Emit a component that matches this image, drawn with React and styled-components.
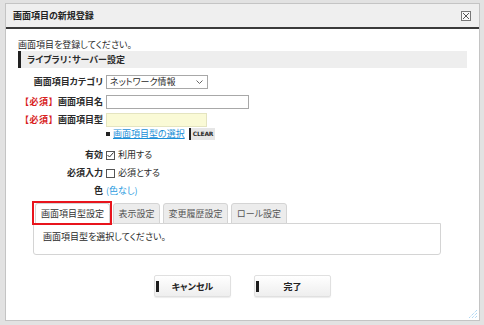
import React from 'react';
import styled, { createGlobalStyle } from 'styled-components';

const GlobalStyle = createGlobalStyle`
  html, body {
    margin: 0;
    padding: 0;
    background: #e2e2e2;
  }
  body {
    font-family: "Noto Sans CJK JP", "DejaVu Sans", sans-serif;
    font-size: 9px;
    line-height: 1.25;
    font-feature-settings: "palt" 1;
    color: #2a2a2a;
  }
`;

const Dialog = styled.div`
  position: relative;
  box-sizing: border-box;
  margin: 3px 4px 0 5px;
  width: 475px;
  height: 318px;
  background: #fff;
  border: 1px solid #c4c4c4;
  display: flex;
  flex-direction: column;
`;

const TitleBar = styled.div`
  height: 23px;
  background: #efefef;
  border-bottom: 2px solid #3a3a3a;
  display: flex;
  align-items: center;
  justify-content: space-between;
  padding: 0 8px 0 7px;
`;

const Title = styled.h1`
  margin: 0;
  font-size: 9px;
  font-weight: bold;
  color: #222;
`;

const CloseBox = styled.span`
  width: 8px;
  height: 8px;
  border: 1px solid #777;
  display: flex;
  align-items: center;
  justify-content: center;
  background: #f8f8f8;
`;

const Body = styled.div`
  flex: 1;
  padding: 10px 12px 0 12px;
  display: flex;
  flex-direction: column;
`;

const Intro = styled.p`
  margin: 0;
  height: 12px;
  line-height: 12px;
`;

const SectionHeader = styled.div`
  height: 17px;
  background: #eeeeee;
  border-left: 3px solid #222;
  padding-left: 6px;
  display: flex;
  align-items: center;
  font-weight: bold;
`;

const Form = styled.div`
  margin-top: 5px;
  display: grid;
  grid-template-columns: 85px 1fr;
  grid-template-rows: 18px 21px 16px 12px 24px 18px 18px;
  column-gap: 3px;
`;

const Label = styled.div`
  text-align: right;
  font-weight: bold;
  align-self: ${p => (p.end ? 'end' : 'center')};
  line-height: 18px;
  white-space: nowrap;
`;

const Req = styled.span`
  color: #d81e1e;
  font-feature-settings: normal;
  letter-spacing: 0.5px;
`;

const Cell = styled.div`
  display: flex;
  align-items: center;
  gap: 3px;
  height: 18px;
  align-self: ${p => (p.end ? 'end' : 'center')};
  white-space: nowrap;
`;

const Select = styled.div`
  box-sizing: border-box;
  width: 102px;
  height: 14px;
  border: 1px solid #a8a8a8;
  display: flex;
  align-items: center;
  justify-content: space-between;
  padding: 0 4px 0 3px;
`;

const TextInput = styled.div`
  box-sizing: border-box;
  width: ${p => p.w}px;
  height: 14px;
  border: 1px solid ${p => (p.yellow ? '#e4e4c0' : '#a8a8a8')};
  background: ${p => (p.yellow ? '#fafad6' : '#fff')};
`;

const Bullet = styled.span`
  width: 4px;
  height: 4px;
  background: #222;
`;

const Link = styled.a`
  color: #1a8fd8;
  text-decoration: underline;
  cursor: pointer;
`;

const ClearButton = styled.span`
  box-sizing: border-box;
  height: 12px;
  margin-left: 1px;
  padding: 0 2px 0 2px;
  border-left: 2px solid #222;
  background: #e6e6e6;
  font-size: 6px;
  font-weight: bold;
  line-height: 12px;
  letter-spacing: -0.2px;
  font-family: "DejaVu Sans", sans-serif;
`;

const Check = styled.span`
  box-sizing: border-box;
  width: 9px;
  height: 9px;
  border: 1px solid #555;
  display: inline-flex;
  align-items: center;
  justify-content: center;
`;

const ColorLink = styled.span`
  color: #2a9be0;
`;

const Tabs = styled.div`
  margin: 3px 0 0 15px;
  display: flex;
  flex-direction: column;
  width: 408px;
`;

const TabRow = styled.div`
  display: flex;
  gap: 3px;
  padding-left: 2px;
`;

const Tab = styled.div`
  position: relative;
  box-sizing: border-box;
  width: ${p => p.w}px;
  height: 21px;
  display: flex;
  align-items: center;
  justify-content: center;
  color: ${p => (p.active ? '#333' : '#555')};
  background: ${p => (p.active ? '#fff' : '#ececec')};
  border: 1px solid #d4d4d4;
  border-bottom: ${p => (p.active ? '1px solid #fff' : '1px solid #d4d4d4')};
  border-radius: 3px 3px 0 0;
  margin-bottom: -1px;
  z-index: ${p => (p.active ? 2 : 1)};
  &::after {
    content: ${p => (p.active ? "''" : 'none')};
    position: absolute;
    left: -4px;
    right: -3px;
    top: -3px;
    bottom: -2px;
    border: 2px solid #e8141c;
  }
`;

const Panel = styled.div`
  box-sizing: border-box;
  height: 32px;
  border: 1px solid #d4d4d4;
  border-radius: 0 0 3px 3px;
  padding: 7px 9px;
`;

const Buttons = styled.div`
  margin-top: 20px;
  display: flex;
  justify-content: center;
  gap: 23px;
`;

const Button = styled.button`
  position: relative;
  box-sizing: border-box;
  width: 77px;
  height: 22px;
  border: 1px solid #e0e0e0;
  border-radius: 2px;
  background: linear-gradient(#ffffff, #eeeeee);
  font-family: inherit;
  font-feature-settings: "palt" 1;
  font-size: 9px;
  font-weight: bold;
  color: #222;
  box-shadow: 0 1px 1px rgba(0, 0, 0, 0.08);
  &::before {
    content: '';
    position: absolute;
    left: 1px;
    top: 5px;
    width: 3px;
    height: 11px;
    background: #1e1e1e;
  }
`;

const Grip = styled.svg`
  position: absolute;
  right: 1px;
  bottom: 1px;
`;

export default function App() {
  return (
    <>
      <GlobalStyle />
      <Dialog>
        <TitleBar>
          <Title>画面項目の新規登録</Title>
          <CloseBox>
            <svg width="6" height="6" viewBox="0 0 6 6">
              <path d="M0 0L6 6M6 0L0 6" stroke="#555" strokeWidth="1" />
            </svg>
          </CloseBox>
        </TitleBar>
        <Body>
          <Intro>画面項目を登録してください。</Intro>
          <SectionHeader>ライブラリ：サーバー設定</SectionHeader>
          <Form>
            <Label>画面項目カテゴリ</Label>
            <Cell>
              <Select>
                <span>ネットワーク情報</span>
                <svg width="7" height="4" viewBox="0 0 7 4">
                  <path d="M0.5 0.5L3.5 3.5L6.5 0.5" fill="none" stroke="#666" />
                </svg>
              </Select>
            </Cell>

            <Label><Req>【必須】</Req>画面項目名</Label>
            <Cell><TextInput w={143} /></Cell>

            <Label><Req>【必須】</Req>画面項目型</Label>
            <Cell><TextInput w={101} yellow /></Cell>

            <div />
            <Cell>
              <Bullet />
              <Link>画面項目型の選択</Link>
              <ClearButton>CLEAR</ClearButton>
            </Cell>

            <Label end>有効</Label>
            <Cell end>
              <Check>
                <svg width="7" height="6" viewBox="0 0 7 6">
                  <path d="M0.5 3L2.5 5L6.5 0.5" fill="none" stroke="#333" strokeWidth="1" />
                </svg>
              </Check>
              <span>利用する</span>
            </Cell>

            <Label>必須入力</Label>
            <Cell>
              <Check />
              <span>必須とする</span>
            </Cell>

            <Label>色</Label>
            <Cell><ColorLink>(色なし)</ColorLink></Cell>
          </Form>

          <Tabs>
            <TabRow>
              <Tab active w={75}>画面項目型設定</Tab>
              <Tab w={47}>表示設定</Tab>
              <Tab w={65}>変更履歴設定</Tab>
              <Tab w={56}>ロール設定</Tab>
            </TabRow>
            <Panel>画面項目型を選択してください。</Panel>
          </Tabs>

          <Buttons>
            <Button>キャンセル</Button>
            <Button>完了</Button>
          </Buttons>
        </Body>
        <Grip width="10" height="10" viewBox="0 0 10 10">
          <path d="M9 1L1 9M9 4L4 9M9 7L7 9" stroke="#8fc7ee" strokeWidth="1" strokeDasharray="1 1" />
        </Grip>
      </Dialog>
    </>
  );
}
